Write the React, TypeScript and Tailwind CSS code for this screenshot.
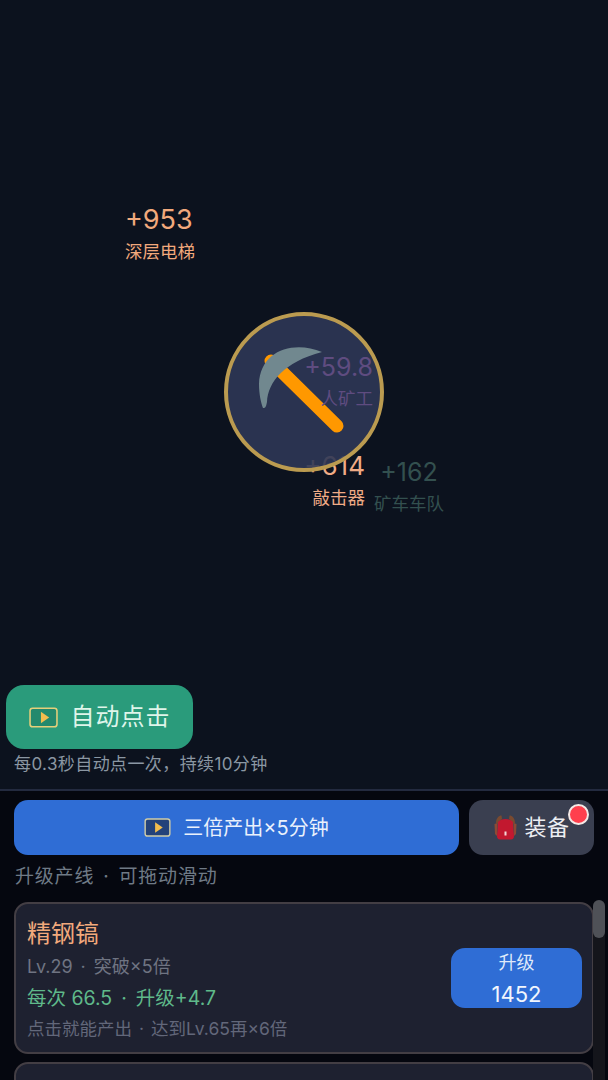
const font = "font-['Inter','Noto_Sans_CJK_SC',sans-serif]";

const PlayIcon = ({ w, h, border, fill }: { w: number; h: number; border: string; fill: string }) => (
  <svg width={w} height={h} viewBox="0 0 28 20" fill="none">
    <rect x="1" y="1" width="26" height="18" rx="2.5" fill={fill} stroke={border} strokeWidth="1.5" />
    <path d="M11.5 4.5 L19.5 10 L11.5 15.5 Z" fill="#f3bd4e" />
  </svg>
);

const Backpack = () => (
  <svg width="25" height="25" viewBox="0 0 25 25">
    <path d="M3 8 C3 3 6 0.5 8.5 0.5 L9 4 C7 5 6 7 6 9 Z" fill="#7a4a30" />
    <path d="M22 8 C22 3 19 0.5 16.5 0.5 L16 4 C18 5 19 7 19 9 Z" fill="#7a4a30" />
    <path d="M5 7 C8 3 17 3 20 7 L21 21 C21 23 20 24.5 18 24.5 L7 24.5 C5 24.5 4 23 4 21 Z" fill="#c2182f" />
    <path d="M1.5 9 L4.5 8 L4 21 L2 19 Z M23.5 9 L20.5 8 L21 21 L23 19 Z" fill="#8d4a34" />
    <rect x="11.5" y="16.5" width="2" height="4" fill="#f3d7d7" />
  </svg>
);

const Pickaxe = () => (
  <svg width="160" height="160" viewBox="0 0 160 160" className="absolute -left-[4px] -top-[4px]">
    <path d="M47 49 L113 114" stroke="#ff9800" strokeWidth="13" strokeLinecap="round" fill="none" />
    <path d="M98 40 C70 28 36 38 35 72 C35 82 37 91 39 96 C42 96 42 94 43 90 C44 70 60 50 98 40 Z" fill="#71888f" />
  </svg>
);

const Floater = ({ value, label, color, className, numSize }: { value: string; label: string; color: string; className: string; numSize: string }) => (
  <div className={`absolute flex flex-col ${color} ${className}`}>
    <span className={`${numSize} leading-[32px]`}>{value}</span>
    <span className="mt-[4px] text-[17.5px] leading-[24px]">{label}</span>
  </div>
);

export default function App() {
  return (
    <div className={`h-[1080px] w-[608px] overflow-hidden bg-[#05070f] ${font}`}>
      <div className="relative h-[791px] border-b-2 border-[#232a3f] bg-[#0c121e]">
        <Floater value="+953" label="深层电梯" numSize="text-[27px]" color="text-[#f2a97c]" className="left-[125px] top-[204px] items-start" />
        <Floater value="+614" label="敲击器" numSize="text-[26px]" color="text-[#f0ab86]" className="right-[243px] top-[450px] items-end" />
        <Floater value="+162" label="矿车车队" numSize="text-[25px]" color="text-[#33504f]" className="left-[374px] top-[456px] items-center" />

        <div className="flex flex-col pl-[6px] pt-[312px]">
          <div className="relative ml-[218px] h-[160px] w-[160px] rounded-full border-[4px] border-[#bb9b50] bg-[#2d3755]/90">
            <Pickaxe />
          </div>
          <button className="mt-[213px] flex h-[64px] w-[187px] items-center justify-center gap-[13px] rounded-[18px] bg-[#2a9b7b] text-[24px] tracking-[1px] text-[#dff5ea]">
            <PlayIcon w={29} h={21} border="#e6cf7a" fill="#23896d" />
            自动点击
          </button>
          <p className="ml-[8px] mt-[3px] text-[17px] leading-[24px] tracking-[0.4px] text-[#8b97a3]">每0.3秒自动点一次，持续10分钟</p>
        </div>

        <Floater value="+59.8" label="人矿工" numSize="text-[25px]" color="text-[#5f4c80]" className="right-[235px] top-[351px] items-end" />
      </div>

      <div className="px-[14px] pt-[9px]">
        <div className="flex gap-[10px]">
          <button className="flex h-[55px] w-[445px] items-center justify-center gap-[12px] rounded-[14px] bg-[#2f6dd5] text-[20px] text-[#eaf1fc]">
            <PlayIcon w={27} h={19} border="#cfcba6" fill="#23427a" />
            三倍产出×5分钟
          </button>
          <button className="relative flex h-[55px] w-[125px] items-center justify-center gap-[6px] rounded-[14px] bg-[#3a3f50] text-[22px] tracking-[0.5px] text-[#eceef2]">
            <Backpack />
            装备
            <span className="absolute right-[5px] top-[4px] h-[21px] w-[21px] rounded-full border-2 border-[#f4e9e6] bg-[#ff3f4d]" />
          </button>
        </div>
        <p className="mt-[8px] pl-[1px] text-[19px] leading-[28px] tracking-[0.8px] text-[#6f7a86]">
          升级产线<span className="mx-[9px]">·</span>可拖动滑动
        </p>

        <div className="relative mt-[11px] flex flex-col gap-[8px]">
          <div className="flex h-[152px] w-[580px] items-center justify-between rounded-[14px] border-2 border-[#433e44] bg-[#1e2130] pl-[11px] pr-[10px]">
            <div className="flex flex-col pt-[4px]">
              <span className="text-[24px] leading-[32px] text-[#f2a97c]">精钢镐</span>
              <span className="mt-[4px] text-[18px] leading-[26px] text-[#6f7482]">
                Lv.29<span className="mx-[8px]">·</span>突破×5倍
              </span>
              <span className="mt-[4px] text-[19.5px] leading-[28px] text-[#5fb98a]">
                每次 66.5<span className="mx-[9px]">·</span>升级+4.7
              </span>
              <span className="mt-[4px] text-[17.5px] leading-[26px] text-[#62677a]">
                点击就能产出<span className="mx-[7px]">·</span>达到Lv.65再×6倍
              </span>
            </div>
            <button className="flex h-[60px] w-[131px] flex-col items-center justify-center rounded-[14px] bg-[#2f6dd5] pt-[4px] text-[#dfe9fa]">
              <span className="text-[18px] leading-[26px]">升级</span>
              <span className="mt-[2px] text-[22px] leading-[32px] text-[#f2f6fd]">1452</span>
            </button>
          </div>
          <div className="h-[152px] w-[580px] rounded-[14px] border-2 border-[#433e44] bg-[#1e2130]" />
          <div className="absolute left-[579px] top-[-2px] h-[190px] w-[12px] rounded-full bg-[#14151b]">
            <div className="h-[38px] w-full rounded-full bg-[#4f5157]" />
          </div>
        </div>
      </div>
    </div>
  );
}
